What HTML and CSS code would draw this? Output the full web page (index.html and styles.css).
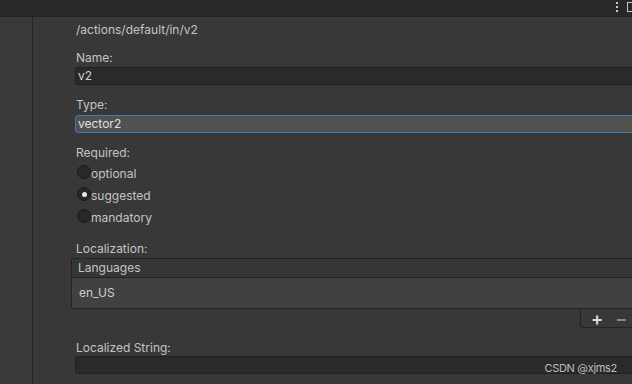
FILE: index.html
```html
<!DOCTYPE html>
<html lang='en'>
<head>
  <meta charset='UTF-8'>
  <title>Input Action Properties</title>
  <link rel="stylesheet" href="styles.css">
</head>
<body>
  <div class='topbar'>
    <span class='menu-dots'><i></i><i></i><i></i></span>
    <span class='maximize'></span>
  </div>
  <div class='main'>
    <div class='sidebar'></div>
    <div class='inspector'>
      <div class='path'>/actions/default/in/v2</div>

      <div class='label'>Name:</div>
      <div class='field'>v2</div>

      <div class='label label-type'>Type:</div>
      <div class='field field-focus'>vector2</div>

      <div class='label label-required'>Required:</div>
      <div class='radios'>
        <div class='radio'><span class='dot'></span>optional</div>
        <div class='radio checked'><span class='dot'></span>suggested</div>
        <div class='radio'><span class='dot'></span>mandatory</div>
      </div>

      <div class='label label-loc'>Localization:</div>
      <div class='list'>
        <div class='list-header'>Languages</div>
        <div class='list-body'>en_US</div>
      </div>
      <div class='list-footer'>
        <div class='list-buttons'>
          <span class='btn-add'>+</span>
          <span class='btn-remove'>&minus;</span>
        </div>
      </div>

      <div class='label label-last'>Localized String:</div>
      <div class='field'></div>
    </div>
  </div>
  <div class='watermark'>CSDN @xjms2</div>
</body>
</html>
```

FILE: styles.css
```css
* {
  box-sizing: border-box;
}

body {
  margin: 0;
  width: 632px;
  height: 384px;
  overflow: hidden;
  background-color: #383838;
  font-family: Inter, "Noto Sans", sans-serif;
  font-size: 12px;
  color: #c4c4c4;
  position: relative;
}

.topbar {
  height: 17px;
  background-color: #282828;
  border-bottom: 1px solid #232323;
  display: flex;
  justify-content: flex-end;
  align-items: flex-start;
  gap: 9px;
  padding-top: 1px;
}

.menu-dots {
  display: flex;
  flex-direction: column;
  gap: 2px;
  padding-top: 1px;
}

.menu-dots i {
  display: block;
  width: 2px;
  height: 2px;
  background: #c8c8c8;
}

.maximize {
  width: 5px;
  height: 10px;
  border: 1px solid #c8c8c8;
  border-right: none;
  margin-top: 1px;
}

.main {
  display: flex;
  height: 367px;
}

.sidebar {
  width: 33px;
  flex-shrink: 0;
  background-color: #393939;
  border-right: 1px solid #232323;
}

.inspector {
  flex: 1;
  padding: 6px 0 0 42px;
  margin-right: -6px;
  display: flex;
  flex-direction: column;
}

.path {
  line-height: 14px;
  padding-left: 1px;
}

.label {
  line-height: 14px;
  padding-left: 1px;
  margin-top: 14px;
  margin-bottom: 2px;
}

.label-type {
  margin-top: 13px;
  margin-bottom: 3px;
}

.label-required {
  margin-top: 13px;
}

.label-loc {
  margin-top: 17px;
}

.label-last {
  margin-top: 13px;
  margin-bottom: 1px;
}

.field {
  height: 18px;
  line-height: 16px;
  background-color: #2a2a2a;
  border: 1px solid #212121;
  border-radius: 3px;
  padding-left: 2px;
  color: #d2d2d2;
}

.field-focus {
  background-color: #515151;
  border-color: #3a79bb;
  color: #e0e0e0;
}

.radios {
  display: flex;
  flex-direction: column;
  gap: 7px;
  margin-top: 4px;
}

.radio {
  display: flex;
  align-items: center;
  height: 15px;
  line-height: 15px;
  padding-left: 2px;
}

.radio .dot {
  width: 14px;
  height: 14px;
  border-radius: 50%;
  background-color: #282828;
  border: 1px solid #1b1b1b;
  margin-top: -3px;
  display: flex;
  align-items: center;
  justify-content: center;
}

.radio.checked .dot::after {
  content: '';
  width: 5px;
  height: 5px;
  border-radius: 50%;
  background: #e8e8e8;
}

.list {
  margin-left: -4px;
  border: 1px solid #232323;
  border-right: none;
  border-radius: 3px 0 0 3px;
}

.list-header {
  height: 19px;
  line-height: 18px;
  padding-left: 6px;
  background-color: #363636;
  border-bottom: 1px solid #232323;
}

.list-body {
  height: 30px;
  line-height: 30px;
  padding-left: 7px;
  background-color: #414141;
  color: #cfcfcf;
  border-radius: 0 0 0 3px;
}

.list-footer {
  display: flex;
  justify-content: flex-end;
}

.list-buttons {
  width: 58px;
  height: 19px;
  border-left: 1px solid #232323;
  border-bottom: 1px solid #232323;
  border-radius: 0 0 0 3px;
  display: flex;
  align-items: center;
  gap: 12px;
  padding-left: 10px;
  font-size: 18px;
  font-weight: 600;
}

.btn-add {
  color: #dcdcdc;
}

.btn-remove {
  color: #8a8a8a;
}

.watermark {
  position: absolute;
  right: 15px;
  bottom: 9px;
  font-size: 11px;
  letter-spacing: -0.3px;
  color: #bdbdbd;
}
```
